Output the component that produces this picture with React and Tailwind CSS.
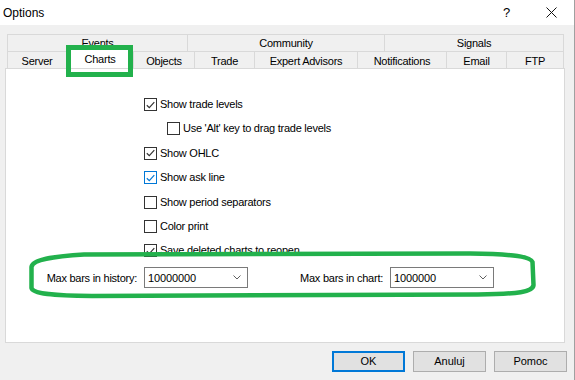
import React from "react";

function Check({ blue }) {
  const c = blue ? "#0078d7" : "#333333";
  return (
    <svg width="9" height="8" viewBox="0 0 9 8" className="block">
      <path d="M0.8 4.2 L3.3 6.6 L8.3 1.2" fill="none" stroke={c} strokeWidth="1.2" />
    </svg>
  );
}

function Box({ checked, blue }) {
  return (
    <div
      className={
        "w-[13px] h-[13px] shrink-0 bg-white border flex items-center justify-center " +
        (blue ? "border-[#0078d7]" : "border-[#333333]")
      }
    >
      {checked ? <Check blue={blue} /> : null}
    </div>
  );
}

function Row({ label, checked, blue, indent }) {
  return (
    <div className={"h-[24.4px] flex items-start " + (indent ? "pl-[23px]" : "")}>
      <div className="flex items-center gap-[3px]">
        <Box checked={checked} blue={blue} />
        <span className="leading-[13px] tracking-[-0.25px]">{label}</span>
      </div>
    </div>
  );
}

function Chevron() {
  return (
    <svg width="8" height="5" viewBox="0 0 8 5" className="block">
      <path d="M0.5 0.5 L4 4 L7.5 0.5" fill="none" stroke="#606060" strokeWidth="1" />
    </svg>
  );
}

function Combo({ value }) {
  return (
    <div className="w-[104px] h-[21px] bg-white border border-[#7a7a7a] flex items-center pl-[3px] pr-[6px]">
      <span className="flex-1 tracking-[-0.1px]">{value}</span>
      <Chevron />
    </div>
  );
}

export default function App() {
  const row1 = [
    ["Events", 180],
    ["Community", 197],
    ["Signals", 180],
  ];
  const row2 = [
    ["Server", 59],
    ["Charts", 67],
    ["Objects", 61],
    ["Trade", 60],
    ["Expert Advisors", 103],
    ["Notifications", 89],
    ["Email", 60],
    ["FTP", 58],
  ];
  return (
    <div className="relative w-[575px] h-[380px] overflow-hidden bg-[#f0f0f0] border-r border-[#a0a0a0] text-black font-['Liberation_Sans',Arial,sans-serif]">
      {/* title bar */}
      <div className="h-[25px] bg-white flex items-center pl-[3px] text-[12px]">
        <span className="flex-1">Options</span>
        <span className="w-[10px] mr-[33px] text-[13px]">?</span>
        <svg width="11" height="11" viewBox="0 0 11 11" className="mr-[17px]">
          <path d="M0.5 0.5 L10.5 10.5 M10.5 0.5 L0.5 10.5" stroke="#111" strokeWidth="1" />
        </svg>
      </div>

      {/* tabs */}
      <div className="mt-[9px] ml-[7px] w-[557px] text-[11px] tracking-[-0.25px]">
        <div className="flex h-[17px]">
          {row1.map(([t, w], i) => (
            <div
              key={t}
              style={{ width: w }}
              className={
                "flex items-center justify-center border-l border-t border-[#d9d9d9] " +
                (i === row1.length - 1 ? "border-r" : "")
              }
            >
              {t}
            </div>
          ))}
        </div>
        <div className="flex h-[17px]">
          {row2.map(([t, w], i) =>
            t === "Charts" ? (
              <div
                key={t}
                style={{ width: w }}
                className="relative z-10 h-[19px] -mt-[2px] bg-white flex items-center justify-center border-l border-t border-[#d9d9d9]"
              >
                {t}
              </div>
            ) : (
              <div
                key={t}
                style={{ width: w }}
                className={
                  "flex items-center justify-center pt-[2px] border-l border-t border-[#d9d9d9] " +
                  (i === row2.length - 1 ? "border-r" : "")
                }
              >
                {t}
              </div>
            )
          )}
        </div>
      </div>

      {/* panel */}
      <div className="ml-[5px] w-[560px] h-[275px] bg-white border border-[#d9d9d9] text-[11px]">
        <div className="pt-[29px]">
          <div className="pl-[138px]">
            <Row label="Show trade levels" checked />
            <Row label="Use 'Alt' key to drag trade levels" indent />
            <Row label="Show OHLC" checked />
            <Row label="Show ask line" checked blue />
            <Row label="Show period separators" />
            <Row label="Color print" />
            <div className="h-[23px] flex items-start">
              <div className="flex items-center gap-[3px]">
                <Box checked />
                <span className="leading-[13px] tracking-[-0.25px]">Save deleted charts to reopen</span>
              </div>
            </div>
          </div>
          <div className="flex items-center h-[21px]">
            <div className="w-[138px] text-right pr-[7px] tracking-[-0.25px]">Max bars in history:</div>
            <Combo value="10000000" />
            <div className="w-[142px] text-right pr-[7px] tracking-[-0.25px]">Max bars in chart:</div>
            <Combo value="1000000" />
          </div>
        </div>
      </div>

      {/* buttons */}
      <div className="flex justify-end gap-[8px] pr-[7px] mt-[8px] text-[11px]">
        <button className="w-[73px] h-[21px] bg-[#e1e1e1] border-2 border-[#0078d7] flex items-center justify-center">
          OK
        </button>
        <button className="w-[73px] h-[21px] bg-[#e1e1e1] border border-[#adadad] flex items-center justify-center">
          Anuluj
        </button>
        <button className="w-[73px] h-[21px] bg-[#e1e1e1] border border-[#adadad] flex items-center justify-center">
          Pomoc
        </button>
      </div>

      {/* annotation: green box around Charts tab */}
      <div className="absolute left-[66px] top-[45px] w-[67px] h-[32px] border-[5px] border-[#22b14c] z-20"></div>

      {/* annotation: green freehand outline */}
      <svg className="absolute left-0 top-0 z-20 pointer-events-none" width="575" height="380" viewBox="0 0 575 380">
        <path
          d="M84 254.5 L470 253.5 C505 254 530 255.5 532.5 262 L533.5 285 C533 292 518 294 478 294.5 L92 296 C52 295.5 33 294 31.5 288 L31.5 267 C32.5 259.5 52 256.5 84 254.5 Z"
          fill="none"
          stroke="#22b14c"
          strokeWidth="4.5"
          strokeLinejoin="round"
        />
      </svg>
    </div>
  );
}
